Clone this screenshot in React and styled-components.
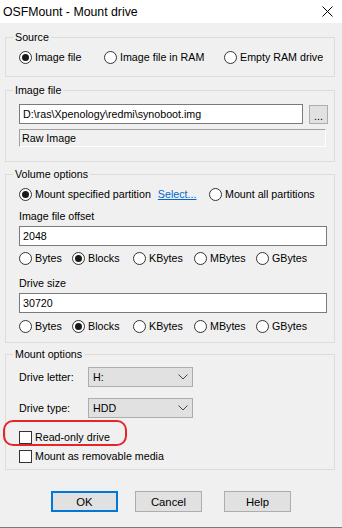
import React from 'react';
import styled, { createGlobalStyle } from 'styled-components';

const GlobalStyle = createGlobalStyle`
  html, body {
    margin: 0;
    padding: 0;
    background: #f0f0f0;
  }
  body {
    font-family: "Liberation Sans", Arial, sans-serif;
    font-size: 10.7px;
    color: #000;
  }
`;

const Window = styled.div`
  position: relative;
  width: 342px;
  height: 528px;
  box-sizing: border-box;
  background: #f0f0f0;
  border-bottom: 1px solid #7a7a7a;
  overflow: hidden;
`;

const TitleBar = styled.div`
  display: flex;
  align-items: center;
  justify-content: space-between;
  height: 23px;
  background: #fff;
  padding: 0 9px 0 3px;
  font-size: 12.3px;
`;

const Body = styled.div`
  padding: 0 7px 0 5px;
`;

const Group = styled.fieldset`
  margin: ${(p) => p.$mt}px 0 0;
  padding: 0;
  border: 1px solid #dcdcdc;
  min-width: 0;
`;

const Legend = styled.legend`
  margin-left: 7px;
  padding: 0 2px;
  line-height: 13px;
  font-size: 10.7px;
`;

const Content = styled.div`
  display: flex;
  flex-direction: column;
  align-items: flex-start;
  padding: ${(p) => p.$pt}px 0 ${(p) => p.$pb}px 13px;
`;

const Row = styled.div`
  display: flex;
  align-items: center;
  height: 13px;
  line-height: 13px;
  margin-top: ${(p) => p.$mt || 0}px;
  position: relative;
`;

const RadioItem = styled.label`
  display: inline-flex;
  align-items: center;
  gap: 3px;
  width: ${(p) => (p.$w ? `${p.$w}px` : 'auto')};
  flex: none;
  white-space: nowrap;
`;

const RadioCircle = styled.span`
  position: relative;
  width: 13px;
  height: 13px;
  box-sizing: border-box;
  border: 1px solid #333;
  border-radius: 50%;
  background: #fff;
  flex: none;
  &::after {
    content: '';
    display: ${(p) => (p.$checked ? 'block' : 'none')};
    position: absolute;
    left: 2px;
    top: 2px;
    width: 7px;
    height: 7px;
    border-radius: 50%;
    background: #1a1a1a;
  }
`;

const CheckBox = styled.span`
  width: 13px;
  height: 13px;
  box-sizing: border-box;
  border: 1px solid #333;
  background: #fff;
  flex: none;
`;

const LinkText = styled.span`
  color: #0066cc;
  text-decoration: underline;
  margin-left: 4px;
`;

const Label = styled.div`
  line-height: 13px;
  height: 13px;
  margin-top: ${(p) => p.$mt || 0}px;
`;

const TextBox = styled.div`
  box-sizing: border-box;
  width: ${(p) => p.$w}px;
  height: 20px;
  margin-top: ${(p) => p.$mt || 0}px;
  border: 1px solid #7a7a7a;
  background: #fff;
  padding-left: 3px;
  display: flex;
  align-items: center;
  white-space: nowrap;
  overflow: hidden;
`;

const StaticBox = styled.div`
  box-sizing: border-box;
  width: 307px;
  height: 18px;
  margin-top: ${(p) => p.$mt || 0}px;
  border: 1px solid #a0a0a0;
  border-right-color: #fff;
  border-bottom-color: #fff;
  padding-left: 2px;
  display: flex;
  align-items: center;
`;

const FileRow = styled.div`
  display: flex;
  align-items: center;
  gap: 6px;
  margin-top: ${(p) => p.$mt || 0}px;
`;

const SmallButton = styled.div`
  box-sizing: border-box;
  width: 19px;
  height: 19px;
  border: 1px solid #adadad;
  background: #e1e1e1;
  display: flex;
  align-items: flex-end;
  justify-content: center;
  padding-bottom: 3px;
  line-height: 8px;
`;

const ComboRow = styled.div`
  display: flex;
  align-items: center;
  margin-top: ${(p) => p.$mt || 0}px;
`;

const ComboLabel = styled.span`
  width: 69px;
  flex: none;
`;

const Combo = styled.div`
  box-sizing: border-box;
  width: 105px;
  height: 20px;
  border: 1px solid #adadad;
  background: #e1e1e1;
  display: flex;
  align-items: center;
  justify-content: space-between;
  padding: 0 4px 0 4px;
`;

const Highlight = styled.div`
  position: absolute;
  left: -16px;
  top: -11px;
  width: 124px;
  height: 26px;
  box-sizing: border-box;
  border: 2px solid #e4262c;
  border-radius: 10px;
  pointer-events: none;
`;

const ButtonRow = styled.div`
  display: flex;
  padding-left: 46px;
  margin-top: 21px;
`;

const Button = styled.div`
  box-sizing: border-box;
  width: ${(p) => p.$w}px;
  height: 21px;
  margin-left: ${(p) => p.$ml || 0}px;
  border: ${(p) => (p.$focus ? '2px solid #0078d7' : '1px solid #adadad')};
  background: #e1e1e1;
  display: flex;
  align-items: center;
  justify-content: center;
  font-size: 11.3px;
`;

const Radio = ({ w, checked, children }) => (
  <RadioItem $w={w}>
    <RadioCircle $checked={checked} />
    {children}
  </RadioItem>
);

const UnitRow = ({ mt }) => (
  <Row $mt={mt}>
    <Radio w={53}>Bytes</Radio>
    <Radio w={61} checked>Blocks</Radio>
    <Radio w={61}>KBytes</Radio>
    <Radio w={62}>MBytes</Radio>
    <Radio>GBytes</Radio>
  </Row>
);

const Chevron = () => (
  <svg width="10" height="6" viewBox="0 0 10 6">
    <polyline points="0.5,0.5 5,5 9.5,0.5" fill="none" stroke="#444" strokeWidth="1" />
  </svg>
);

const CloseIcon = () => (
  <svg width="11" height="11" viewBox="0 0 11 11">
    <line x1="0.5" y1="0.5" x2="10.5" y2="10.5" stroke="#000" strokeWidth="1" />
    <line x1="10.5" y1="0.5" x2="0.5" y2="10.5" stroke="#000" strokeWidth="1" />
  </svg>
);

export default function App() {
  return (
    <>
      <GlobalStyle />
      <Window>
        <TitleBar>
          <span>OSFMount - Mount drive</span>
          <CloseIcon />
        </TitleBar>
        <Body>
          <Group $mt={8}>
            <Legend>Source</Legend>
            <Content $pt={7} $pb={12}>
              <Row>
                <Radio w={85} checked>Image file</Radio>
                <Radio w={120}>Image file in RAM</Radio>
                <Radio>Empty RAM drive</Radio>
              </Row>
            </Content>
          </Group>

          <Group $mt={7}>
            <Legend>Image file</Legend>
            <Content $pt={7} $pb={14}>
              <FileRow>
                <TextBox $w={284}>D:\ras\Xpenology\redmi\synoboot.img</TextBox>
                <SmallButton>...</SmallButton>
              </FileRow>
              <StaticBox $mt={5}>Raw Image</StaticBox>
            </Content>
          </Group>

          <Group $mt={6}>
            <Legend>Volume options</Legend>
            <Content $pt={7} $pb={9}>
              <Row>
                <RadioItem $w={190}>
                  <RadioCircle $checked />
                  Mount specified partition
                  <LinkText>Select...</LinkText>
                </RadioItem>
                <Radio>Mount all partitions</Radio>
              </Row>
              <Label $mt={9}>Image file offset</Label>
              <TextBox $w={308} $mt={3}>2048</TextBox>
              <UnitRow mt={6} />
              <Label $mt={12}>Drive size</Label>
              <TextBox $w={308} $mt={3}>30720</TextBox>
              <UnitRow mt={7} />
            </Content>
          </Group>

          <Group $mt={5}>
            <Legend>Mount options</Legend>
            <Content $pt={6} $pb={6}>
              <ComboRow>
                <ComboLabel>Drive letter:</ComboLabel>
                <Combo>
                  <span>H:</span>
                  <Chevron />
                </Combo>
              </ComboRow>
              <ComboRow $mt={11}>
                <ComboLabel>Drive type:</ComboLabel>
                <Combo>
                  <span>HDD</span>
                  <Chevron />
                </Combo>
              </ComboRow>
              <Row $mt={13}>
                <RadioItem>
                  <CheckBox />
                  Read-only drive
                </RadioItem>
                <Highlight />
              </Row>
              <Row $mt={6}>
                <RadioItem>
                  <CheckBox />
                  Mount as removable media
                </RadioItem>
              </Row>
            </Content>
          </Group>

          <ButtonRow>
            <Button $w={67} $focus>OK</Button>
            <Button $w={67} $ml={17}>Cancel</Button>
            <Button $w={67} $ml={22}>Help</Button>
          </ButtonRow>
        </Body>
      </Window>
    </>
  );
}
